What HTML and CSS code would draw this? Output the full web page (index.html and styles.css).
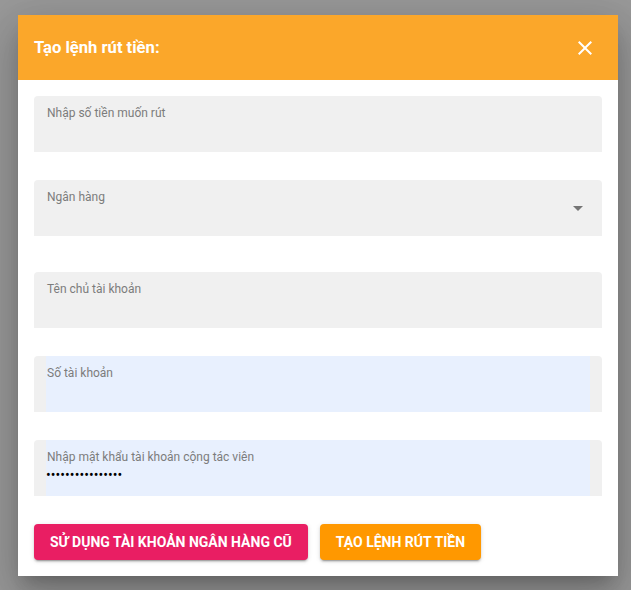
FILE: index.html
```html
<!DOCTYPE html>
<html lang="vi">
<head>
<meta charset="utf-8">
<title>Tạo lệnh rút tiền</title>
<link rel="stylesheet" href="styles.css">
</head>
<body>
<div class="dialog">
  <div class="dialog-header">
    <h2 class="dialog-title">Tạo lệnh rút tiền:</h2>
    <button class="close-btn" aria-label="Đóng">
      <svg viewBox="0 0 24 24" width="24" height="24"><path fill="#fff" d="M19 6.41L17.59 5 12 10.59 6.41 5 5 6.41 10.59 12 5 17.59 6.41 19 12 13.41 17.59 19 19 17.59 13.41 12z"/></svg>
    </button>
  </div>
  <div class="dialog-body">
    <div class="field">
      <div class="field-inner"><span class="field-label">Nhập số tiền muốn rút</span></div>
    </div>
    <div class="field field-select">
      <div class="field-inner"><span class="field-label">Ngân hàng</span></div>
      <svg class="select-arrow" viewBox="0 0 24 24" width="24" height="24"><path fill="#757575" d="M7 10l5 5 5-5z"/></svg>
    </div>
    <div class="field">
      <div class="field-inner"><span class="field-label">Tên chủ tài khoản</span></div>
    </div>
    <div class="field field-autofill">
      <div class="field-inner"><span class="field-label">Số tài khoản</span></div>
    </div>
    <div class="field field-autofill">
      <div class="field-inner"><span class="field-label">Nhập mật khẩu tài khoản cộng tác viên</span><span class="field-value">••••••••••••••••</span></div>
    </div>
    <div class="actions">
      <button class="btn btn-pink">Sử dụng tài khoản ngân hàng cũ</button>
      <button class="btn btn-orange">Tạo lệnh rút tiền</button>
    </div>
  </div>
</div>
</body>
</html>
```
FILE: styles.css
```css
* { box-sizing: border-box; }
html, body { margin: 0; height: 100%; }
body {
  background: #999999;
  font-family: Roboto, "Noto Sans", Arial, sans-serif;
  padding: 15px 0 0 18px;
}
.dialog {
  width: 600px;
  background: #fff;
  box-shadow: 0 11px 15px -7px rgba(0,0,0,0.2), 0 24px 38px 3px rgba(0,0,0,0.14), 0 9px 46px 8px rgba(0,0,0,0.12);
}
.dialog-header {
  height: 65px;
  background: #fba72a;
  display: flex;
  align-items: center;
  justify-content: space-between;
  padding: 0 21px 0 16px;
}
.dialog-title {
  margin: 0;
  color: #fff;
  font-size: 16.6px;
  font-weight: 700;
}
.close-btn {
  border: 0;
  background: none;
  padding: 0;
  width: 24px;
  height: 24px;
  display: block;
  cursor: pointer;
}
.close-btn svg { display: block; }
.dialog-body {
  padding: 16px;
  display: flex;
  flex-direction: column;
}
.field {
  height: 56px;
  background: #f0f0f0;
  border-radius: 4px 4px 0 0;
  padding: 0 12px;
  display: flex;
  margin-bottom: 28px;
}
.field-select { margin-bottom: 36px; align-items: center; }
.field-inner {
  flex: 1;
  align-self: stretch;
  display: flex;
  flex-direction: column;
  padding-top: 10px;
}
.field-autofill .field-inner { background: #e8f0fe; }
.field-label {
  font-size: 12px;
  line-height: 14px;
  color: #7c7c7c;
  padding-left: 1px;
}
.field-value {
  font-size: 14px;
  line-height: 20px;
  padding-top: 1px;
  color: #000;
  letter-spacing: 0.05px;
}
.select-arrow { display: block; }
.actions {
  display: flex;
  gap: 12px;
}
.btn {
  height: 36px;
  border: 0;
  border-radius: 4px;
  padding: 0 16px;
  color: #fff;
  font-family: Roboto, "Noto Sans", Arial, sans-serif;
  font-size: 14px;
  font-weight: 700;
  text-transform: uppercase;
  box-shadow: 0 3px 1px -2px rgba(0,0,0,0.2), 0 2px 2px 0 rgba(0,0,0,0.14), 0 1px 5px 0 rgba(0,0,0,0.12);
  cursor: pointer;
}
.btn-pink { background: #e91e63; }
.btn-orange { background: #ff9800; }
```
